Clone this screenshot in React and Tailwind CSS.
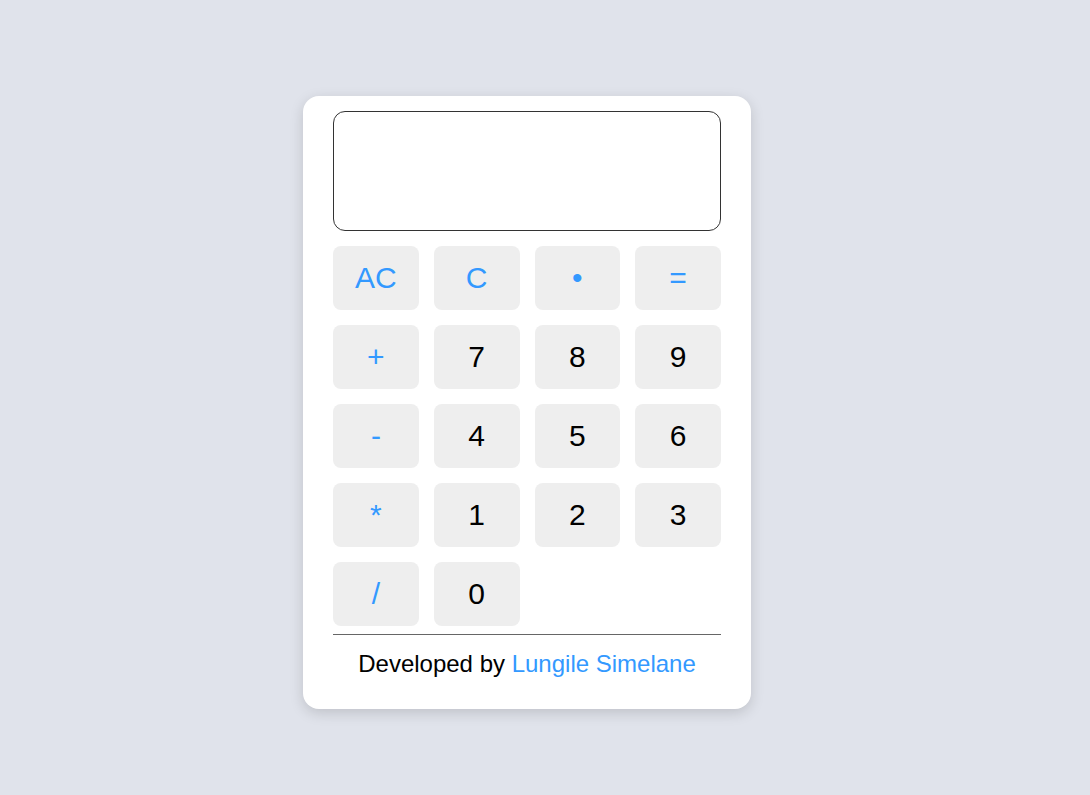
const keys = [
  { label: "AC", op: true },
  { label: "C", op: true },
  { label: "•", op: true },
  { label: "=", op: true },
  { label: "+", op: true },
  { label: "7" },
  { label: "8" },
  { label: "9" },
  { label: "-", op: true },
  { label: "4" },
  { label: "5" },
  { label: "6" },
  { label: "*", op: true },
  { label: "1" },
  { label: "2" },
  { label: "3" },
  { label: "/", op: true },
  { label: "0" },
];

export default function App() {
  return (
    <div className="min-h-screen bg-[#e0e3eb] flex justify-center items-start pt-[96px] pr-[36px] font-['Liberation_Sans',Arial,sans-serif]">
      <div className="w-[448px] bg-white rounded-2xl shadow-[0_4px_14px_rgba(0,0,0,0.15)] px-[30px] pt-[15px] pb-[31px]">
        <div className="h-[120px] rounded-xl border border-[#333] bg-white" />
        <div className="grid grid-cols-4 gap-[15px] mt-[15px]">
          {keys.map(k => (
            <button key={k.label}
              className={`h-[64px] rounded-lg bg-[#eeeeee] text-[30px] leading-none ${k.op ? "text-[#3399ff]" : "text-black"}`}>
              {k.label}
            </button>
          ))}
        </div>
        <div className="mt-[8px] border-t border-[#666]" />
        <p className="mt-[15px] text-center text-[24px] leading-[28px] text-black">
          Developed by <span className="text-[#3399ff]">Lungile Simelane</span>
        </p>
      </div>
    </div>
  );
}
